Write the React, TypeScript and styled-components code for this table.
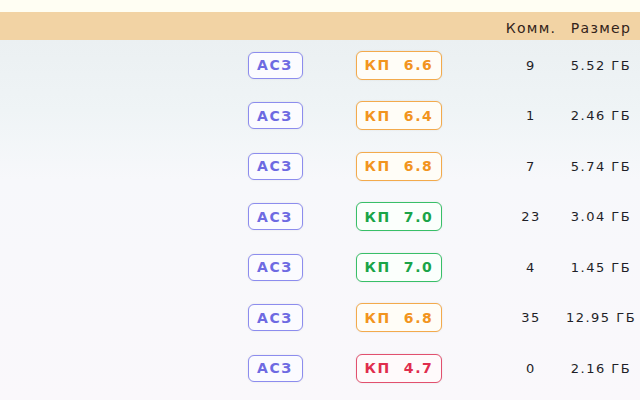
import React from "react";
import styled, { createGlobalStyle } from "styled-components";

const Global = createGlobalStyle`
  html, body { margin: 0; padding: 0; }
  body {
    width: 640px;
    height: 400px;
    overflow: hidden;
    font-family: "DejaVu Sans", Verdana, sans-serif;
    background: #faf8fb;
  }
`;

const Page = styled.div`
  width: 640px;
  height: 400px;
  display: flex;
  flex-direction: column;
  background: linear-gradient(to bottom, #fffef3 0px, #fffef3 12px, #f2d3a4 12px, #f2d3a4 40px, #ebf0f2 40px, #eff4f6 110px, #f7f8fb 180px, #faf8fb 400px);
`;

const TopStrip = styled.div`
  height: 12px;
  flex: none;
`;

const columns = "222px 106px 142px 30px 62px 78px";

const HeaderRow = styled.div`
  height: 28px;
  flex: none;
  display: grid;
  grid-template-columns: ${columns};
  align-items: center;
  padding-top: 3px;
  box-sizing: border-box;
`;

const HeadCell = styled.div<{ $col: number }>`
  grid-column: ${(p) => p.$col};
  text-align: center;
  font-size: 14px;
  letter-spacing: 1.3px;
  color: #33231b;
  white-space: nowrap;
`;

const Body = styled.div`
  display: grid;
  grid-template-columns: ${columns};
  grid-auto-rows: 50.5px;
  align-items: center;
`;

const Cell = styled.div<{ $col: number }>`
  grid-column: ${(p) => p.$col};
  display: flex;
  justify-content: center;
  align-items: center;
`;

const NumText = styled.span`
  font-size: 13px;
  letter-spacing: 1.5px;
  color: #1f1f28;
  white-space: pre;
`;

type Tone = "blue" | "orange" | "green" | "red";

const tones: Record<Tone, { border: string; text: string; bg: string }> = {
  blue: { border: "#8c8cee", text: "#6e6ae2", bg: "#fbfbff" },
  orange: { border: "#f3aa4c", text: "#f29420", bg: "#fffdf7" },
  green: { border: "#38bf68", text: "#1aa448", bg: "#fbfffc" },
  red: { border: "#e2506e", text: "#e02d4d", bg: "#fffafb" },
};

const Badge = styled.span<{ $tone: Tone; $w: number; $h: number }>`
  box-sizing: border-box;
  width: ${(p) => p.$w}px;
  height: ${(p) => p.$h}px;
  display: inline-flex;
  align-items: center;
  justify-content: center;
  border: 1.5px solid ${(p) => tones[p.$tone].border};
  border-radius: 6px;
  background: ${(p) => tones[p.$tone].bg};
  color: ${(p) => tones[p.$tone].text};
  font-weight: bold;
  font-size: 14px;
  letter-spacing: 1.6px;
  white-space: pre;
  box-shadow: 0 0 2px rgba(0, 0, 0, 0.1);
`;

const rows: { kp: string; tone: Tone; comm: string; size: string }[] = [
  { kp: "6.6", tone: "orange", comm: "9", size: "5.52 ГБ" },
  { kp: "6.4", tone: "orange", comm: "1", size: "2.46 ГБ" },
  { kp: "6.8", tone: "orange", comm: "7", size: "5.74 ГБ" },
  { kp: "7.0", tone: "green", comm: "23", size: "3.04 ГБ" },
  { kp: "7.0", tone: "green", comm: "4", size: "1.45 ГБ" },
  { kp: "6.8", tone: "orange", comm: "35", size: "12.95 ГБ" },
  { kp: "4.7", tone: "red", comm: "0", size: "2.16 ГБ" },
];

export default function App() {
  return (
    <>
      <Global />
      <Page>
        <TopStrip />
        <HeaderRow>
          <HeadCell $col={5}>Комм.</HeadCell>
          <HeadCell $col={6}>Размер</HeadCell>
        </HeaderRow>
        <Body>
          {rows.map((r, i) => (
            <React.Fragment key={i}>
              <Cell $col={2}>
                <Badge $tone="blue" $w={55} $h={27}>АСЗ</Badge>
              </Cell>
              <Cell $col={3}>
                <Badge $tone={r.tone} $w={86} $h={29}>{"КП  " + r.kp}</Badge>
              </Cell>
              <Cell $col={5}>
                <NumText>{r.comm}</NumText>
              </Cell>
              <Cell $col={6}>
                <NumText>{r.size}</NumText>
              </Cell>
            </React.Fragment>
          ))}
        </Body>
      </Page>
    </>
  );
}
